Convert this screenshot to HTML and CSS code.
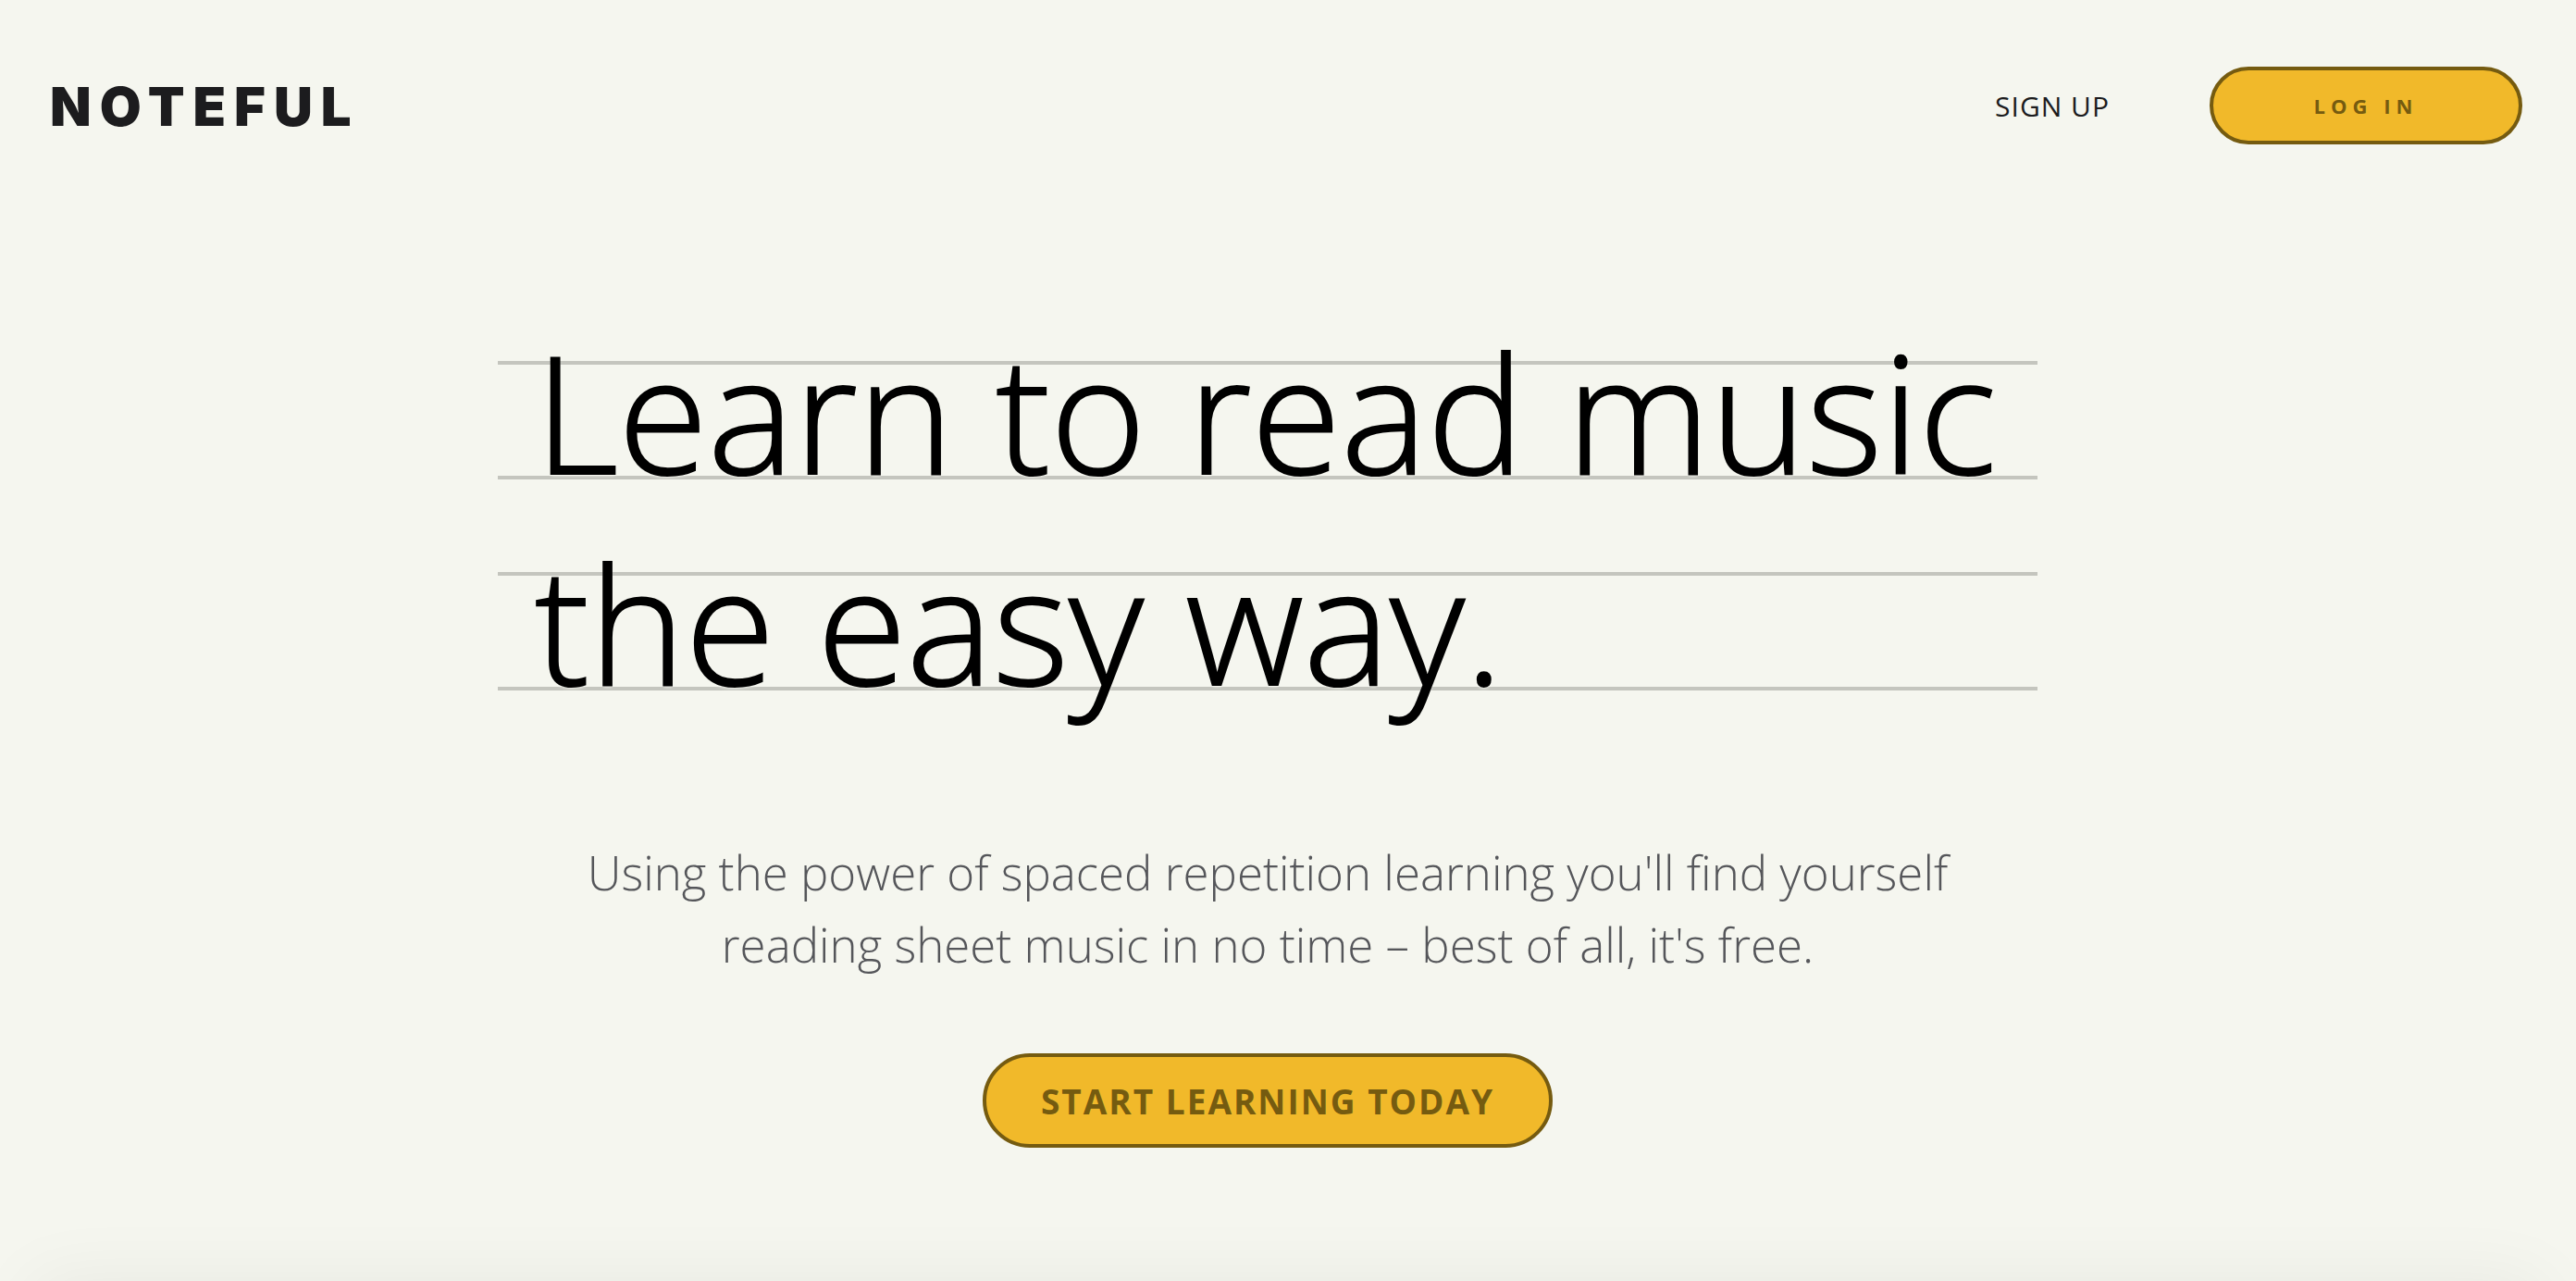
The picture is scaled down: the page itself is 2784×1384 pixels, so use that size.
FILE: index.html
```
<!DOCTYPE html>
<html lang="en">
<head>
  <meta charset="utf-8">
  <meta name="viewport" content="width=device-width, initial-scale=1">
  <title>Noteful</title>
  <link rel="stylesheet" href="styles.css">
</head>
<body>
  <div class="page">
    <header class="site-header">
      <a class="logo" href="#">NOTEFUL</a>
      <nav class="site-nav">
        <a class="nav-link" href="#">SIGN UP</a>
        <button class="button button-login" type="button">LOG IN</button>
      </nav>
    </header>
    <main class="hero">
      <h1 class="hero-title">Learn to read music<br>the easy way.</h1>
      <p class="hero-text">Using the power of spaced repetition learning you'll find yourself reading sheet music in no time – best of all, it's free.</p>
      <button class="button button-start" type="button">START LEARNING TODAY</button>
    </main>
  </div>
</body>
</html>
```
FILE: styles.css
```
* {
  box-sizing: border-box;
}

body {
  margin: 0;
  background: #f5f6ef;
  color: #000;
  font-family: "Open Sans", sans-serif;
}

.page {
  position: relative;
  min-height: 100vh;
  overflow: hidden;
}

/* soft shade cast upwards by the lower edge of the page */
.page::after {
  content: "";
  position: absolute;
  top: 100%;
  left: 36px;
  right: 36px;
  height: 200px;
  box-shadow: 0 0 80px rgba(0, 0, 0, 0.06);
}

.site-header {
  display: flex;
  align-items: center;
  justify-content: space-between;
  padding: 72px 58px 0 54px;
}

.logo {
  padding-top: 2px;
  color: #1c1c1e;
  font-family: "Inter", sans-serif;
  font-size: 58px;
  font-weight: 900;
  line-height: 72px;
  letter-spacing: 9px;
  text-decoration: none;
}

.site-nav {
  display: flex;
  align-items: center;
  gap: 108px;
}

.nav-link {
  color: #1c1c1e;
  font-size: 30px;
  letter-spacing: 1px;
  text-decoration: none;
}

.button {
  border: 4px solid #755b10;
  border-radius: 52px;
  background: #f1b92a;
  color: #755b10;
  font-family: inherit;
  font-weight: 700;
  cursor: pointer;
}

.button-login {
  width: 338px;
  height: 84px;
  font-size: 22px;
  letter-spacing: 6px;
}

.button-start {
  height: 102px;
  padding: 0 59px;
  font-size: 37px;
  letter-spacing: 2px;
}

.hero {
  display: flex;
  flex-direction: column;
  align-items: center;
  padding: 174px 44px 144px 0;
}

/* each line of the title sits between two ruled lines */
.hero-title {
  width: 100%;
  max-width: 1664px;
  margin: 0;
  padding: 0 40px;
  background: linear-gradient(
    transparent 60px,
    #c4c5be 60px,
    #c4c5be 64px,
    transparent 64px,
    transparent 184px,
    #c4c5be 184px,
    #c4c5be 188px,
    transparent 188px
  ) 0 0 / 100% 228px;
  font-size: 176px;
  font-weight: 300;
  line-height: 228px;
  -webkit-text-stroke: 2px #000;
  text-shadow: 0 2px 3px #f5f6ef;
}

.hero-text {
  max-width: 1560px;
  margin: 117px 0 79px;
  color: #55565a;
  font-size: 51px;
  font-weight: 300;
  line-height: 78px;
  text-align: center;
}
```
